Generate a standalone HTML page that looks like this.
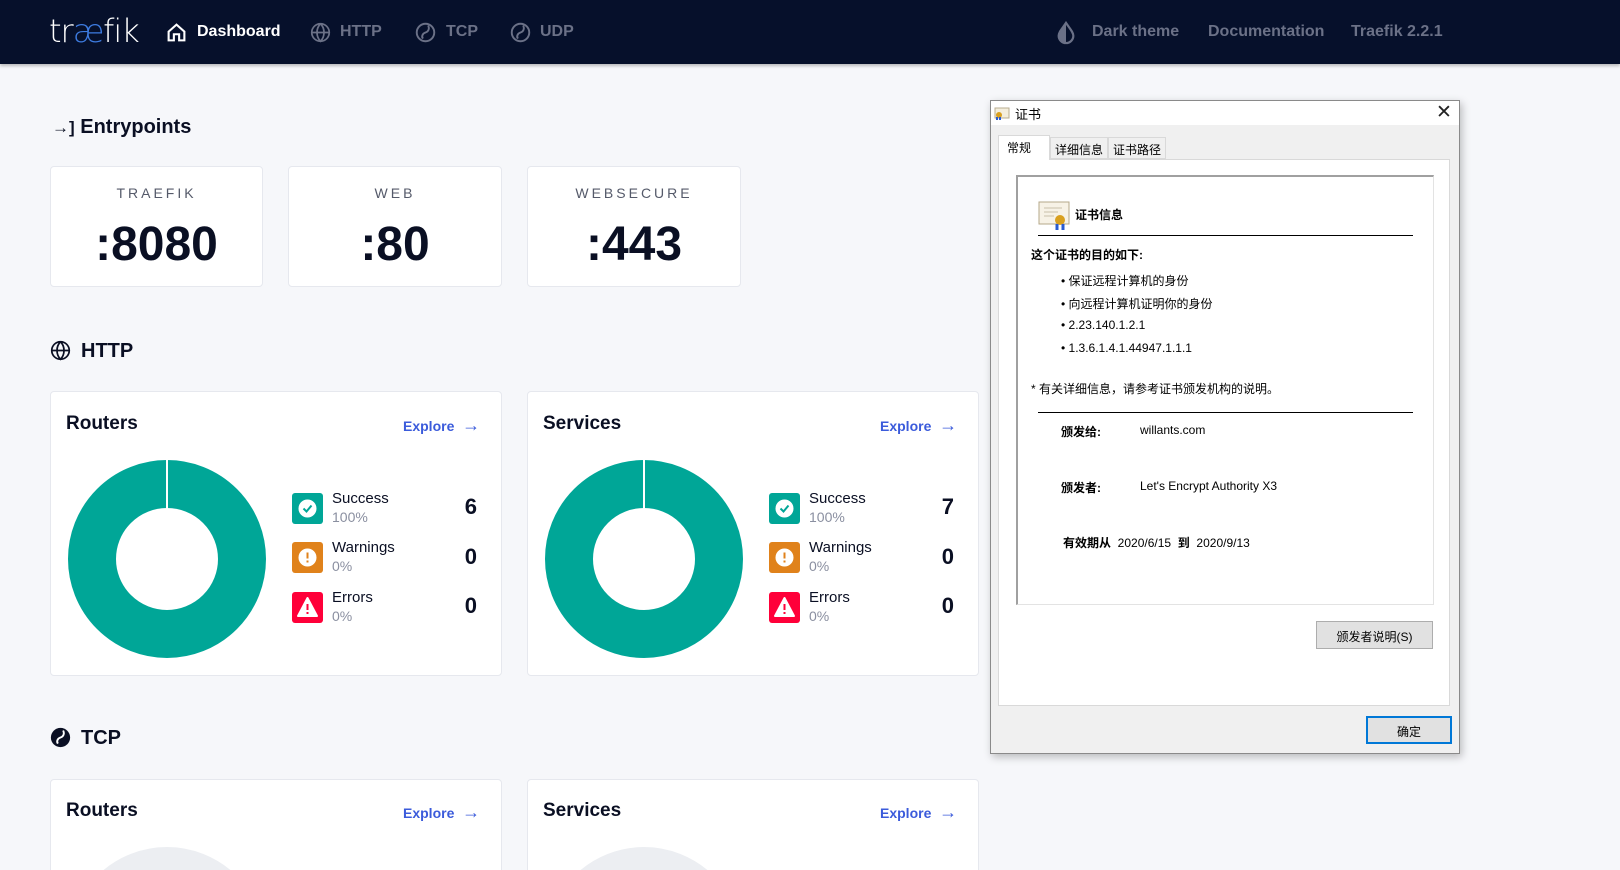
<!DOCTYPE html>
<html><head><meta charset="utf-8"><style>
*{margin:0;padding:0;box-sizing:border-box}
html,body{width:1620px;height:870px;overflow:hidden}
body{background:#f6f7fa;font-family:"Liberation Sans","Noto Sans CJK SC",sans-serif;position:relative;color:#0a0f23}
.a{position:absolute}
.nav{left:0;top:0;width:1620px;height:64px;background:#06102b;box-shadow:0 2px 3px rgba(0,0,0,.25)}
.ni{color:#6b7187;font-size:16px;font-weight:bold;top:23px}
.h{font-size:20px;font-weight:bold;color:#0a0f23}
.card{background:#fff;border:1px solid #e6e8ee;border-radius:4px}
.lbl{width:100%;text-align:center;font-size:14px;letter-spacing:3px;color:#555a6a}
.val{width:100%;text-align:center;font-size:48px;font-weight:bold;color:#0a0f23}
.ct{font-size:19px;font-weight:bold}
.ex{font-size:14px;color:#3b5bdb;font-weight:bold}
.ic{width:31px;height:31px;border-radius:3px}
.st{font-size:15px;color:#0a0f23;line-height:18px}
.st span{display:block;color:#8a8fa0;font-size:14px}
.num{font-size:22px;font-weight:bold;width:30px;text-align:right}
.d{font-size:12px;color:#000}
.b{font-weight:bold}
</style></head><body>
<div class="a nav"></div>
<div class="a" style="left:49px;top:12px;font-size:32px;color:#fff;font-family:'DejaVu Sans',sans-serif;font-weight:200;letter-spacing:-1px">tr<span style="color:#3d7be0">æ</span>fik</div>
<svg class="a" style="left:166px;top:22px" width="21" height="21" viewBox="0 0 24 24" fill="none" stroke="#fff" stroke-width="2.4"><path d="M3 11L12 3l9 8v10H15v-7H9v7H3z"/></svg>
<div class="a ni" style="left:197px;color:#fff">Dashboard</div>
<svg class="a" style="left:310px;top:22px" width="21" height="21" viewBox="0 0 24 24" fill="none" stroke="#6b7187" stroke-width="2"><circle cx="12" cy="12" r="10"/><path d="M2 12h20M12 2c3 3 4 6 4 10s-1 7-4 10c-3-3-4-6-4-10s1-7 4-10"/></svg>
<div class="a ni" style="left:340px">HTTP</div>
<svg class="a" style="left:415px;top:22px" width="21" height="21" viewBox="0 0 24 24" fill="none" stroke="#6b7187" stroke-width="2.2"><circle cx="12" cy="12" r="10"/><path d="M9 19c-2-3 0-6 3-7s5-4 3-8"/></svg>
<div class="a ni" style="left:446px">TCP</div>
<svg class="a" style="left:510px;top:22px" width="21" height="21" viewBox="0 0 24 24" fill="none" stroke="#6b7187" stroke-width="2.2"><circle cx="12" cy="12" r="10"/><path d="M9 19c-2-3 0-6 3-7s5-4 3-8"/></svg>
<div class="a ni" style="left:540px">UDP</div>
<svg class="a" style="left:1055px;top:21px" width="22" height="24" viewBox="0 0 24 26"><path d="M12 2C8 8 4 12 4 16a8 8 0 0016 0c0-4-4-8-8-14z" fill="none" stroke="#6b7187" stroke-width="2.4"/><path d="M12 2C8 8 4 12 4 16a8 8 0 008 8z" fill="#6b7187"/></svg>
<div class="a ni" style="left:1092px">Dark theme</div>
<div class="a ni" style="left:1208px">Documentation</div>
<div class="a ni" style="left:1351px">Traefik 2.2.1</div>

<div class="a h" style="left:52px;top:116px"><span style="font-size:17px">→]</span>&nbsp;Entrypoints</div>
<div class="a card" style="left:50px;top:166px;width:213px;height:121px"><div class="a lbl" style="top:18px">TRAEFIK</div><div class="a val" style="top:50px">:8080</div></div>
<div class="a card" style="left:288px;top:166px;width:214px;height:121px"><div class="a lbl" style="top:18px">WEB</div><div class="a val" style="top:50px">:80</div></div>
<div class="a card" style="left:527px;top:166px;width:214px;height:121px"><div class="a lbl" style="top:18px">WEBSECURE</div><div class="a val" style="top:50px">:443</div></div>

<svg class="a" style="left:50px;top:340px" width="21" height="21" viewBox="0 0 24 24" fill="none" stroke="#0a0f23" stroke-width="2"><circle cx="12" cy="12" r="10"/><path d="M2 12h20M12 2c3 3 4 6 4 10s-1 7-4 10c-3-3-4-6-4-10s1-7 4-10"/></svg>
<div class="a h" style="left:81px;top:340px">HTTP</div>

<div class="a card" style="left:50px;top:391px;width:452px;height:285px"></div>
<div class="a card" style="left:527px;top:391px;width:452px;height:285px"></div>
<div class="a ct" style="left:66px;top:413px">Routers</div>
<div class="a ct" style="left:543px;top:413px">Services</div>
<div class="a ex" style="left:403px;top:415px">Explore &nbsp;<span style="font-size:18px">→</span></div>
<div class="a ex" style="left:880px;top:415px">Explore &nbsp;<span style="font-size:18px">→</span></div>
<svg class="a" style="left:67px;top:459px" width="200" height="200"><circle cx="100" cy="100" r="75" fill="none" stroke="#00a697" stroke-width="48"/><line x1="100" y1="0" x2="100" y2="50" stroke="#fff" stroke-width="2"/></svg>
<svg class="a" style="left:544px;top:459px" width="200" height="200"><circle cx="100" cy="100" r="75" fill="none" stroke="#00a697" stroke-width="48"/><line x1="100" y1="0" x2="100" y2="50" stroke="#fff" stroke-width="2"/></svg>

<div class="a" style="left:292px;top:493px">
 <div class="a ic" style="top:0;background:#00a697"><svg width="31" height="31"><circle cx="15.5" cy="15.5" r="9" fill="#fff"/><path d="M11.5 15.5l3 3 5-6" stroke="#00a697" stroke-width="2" fill="none"/></svg></div>
 <div class="a st" style="left:40px;top:-3px;width:100px">Success<span>100%</span></div><div class="a num" style="left:155px;top:1px">6</div>
 <div class="a ic" style="top:49px;background:#e0821b"><svg width="31" height="31"><circle cx="15.5" cy="15.5" r="9" fill="#fff"/><path d="M15.5 10.5v6M15.5 18.5v2" stroke="#e0821b" stroke-width="2"/></svg></div>
 <div class="a st" style="left:40px;top:46px;width:100px">Warnings<span>0%</span></div><div class="a num" style="left:155px;top:51px">0</div>
 <div class="a ic" style="top:99px;background:#ff0039"><svg width="31" height="31"><path d="M15.5 6L25 24H6z" fill="#fff" stroke="#fff" stroke-linejoin="round" stroke-width="2"/><path d="M15.5 12v6M15.5 20v2" stroke="#ff0039" stroke-width="2"/></svg></div>
 <div class="a st" style="left:40px;top:96px;width:100px">Errors<span>0%</span></div><div class="a num" style="left:155px;top:100px">0</div>
</div>
<div class="a" style="left:769px;top:493px">
 <div class="a ic" style="top:0;background:#00a697"><svg width="31" height="31"><circle cx="15.5" cy="15.5" r="9" fill="#fff"/><path d="M11.5 15.5l3 3 5-6" stroke="#00a697" stroke-width="2" fill="none"/></svg></div>
 <div class="a st" style="left:40px;top:-3px;width:100px">Success<span>100%</span></div><div class="a num" style="left:155px;top:1px">7</div>
 <div class="a ic" style="top:49px;background:#e0821b"><svg width="31" height="31"><circle cx="15.5" cy="15.5" r="9" fill="#fff"/><path d="M15.5 10.5v6M15.5 18.5v2" stroke="#e0821b" stroke-width="2"/></svg></div>
 <div class="a st" style="left:40px;top:46px;width:100px">Warnings<span>0%</span></div><div class="a num" style="left:155px;top:51px">0</div>
 <div class="a ic" style="top:99px;background:#ff0039"><svg width="31" height="31"><path d="M15.5 6L25 24H6z" fill="#fff" stroke="#fff" stroke-linejoin="round" stroke-width="2"/><path d="M15.5 12v6M15.5 20v2" stroke="#ff0039" stroke-width="2"/></svg></div>
 <div class="a st" style="left:40px;top:96px;width:100px">Errors<span>0%</span></div><div class="a num" style="left:155px;top:100px">0</div>
</div>

<svg class="a" style="left:50px;top:727px" width="21" height="21" viewBox="0 0 24 24"><circle cx="12" cy="12" r="11" fill="#0a0f23"/><path d="M9 19c-2-3 0-6 3-7s5-4 3-8" stroke="#fff" stroke-width="2.2" fill="none"/></svg>
<div class="a h" style="left:81px;top:727px">TCP</div>
<div class="a card" style="left:50px;top:779px;width:452px;height:100px"></div>
<div class="a card" style="left:527px;top:779px;width:452px;height:100px"></div>
<div class="a ct" style="left:66px;top:800px">Routers</div>
<div class="a ct" style="left:543px;top:800px">Services</div>
<div class="a ex" style="left:403px;top:802px">Explore &nbsp;<span style="font-size:18px">→</span></div>
<div class="a ex" style="left:880px;top:802px">Explore &nbsp;<span style="font-size:18px">→</span></div>
<svg class="a" style="left:67px;top:846px" width="200" height="24"><circle cx="100" cy="100" r="75" fill="none" stroke="#eceef2" stroke-width="48"/></svg>
<svg class="a" style="left:544px;top:846px" width="200" height="24"><circle cx="100" cy="100" r="75" fill="none" stroke="#eceef2" stroke-width="48"/></svg>

<!-- dialog -->
<div class="a" style="left:990px;top:100px;width:470px;height:654px;background:#f0f0f0;border:1px solid #8a8a8a;box-shadow:2px 3px 8px rgba(0,0,0,.25)"></div>
<div class="a" style="left:991px;top:101px;width:468px;height:24px;background:#fff"></div>
<svg class="a" style="left:994px;top:106px" width="16" height="14"><rect x="1" y="2" width="14" height="10" fill="#f4eedd" stroke="#b9ad90"/><circle cx="5" cy="9" r="3" fill="#d9a020"/><path d="M3 11v3M6 11v3" stroke="#2a5bd0" stroke-width="2"/></svg>
<div class="a d" style="left:1015px;top:104px;font-size:13px">证书</div>
<div class="a" style="left:1436px;top:101px;font-size:19px;color:#222;font-family:'DejaVu Sans',sans-serif;font-weight:200">✕</div>
<div class="a" style="left:998px;top:159px;width:452px;height:547px;background:#fff;border:1px solid #d9d9d9"></div>
<div class="a d" style="left:998px;top:135px;width:52px;height:25px;background:#fff;border:1px solid #d9d9d9;border-bottom:none;padding:3px 0 0 8px">常规</div>
<div class="a d" style="left:1050px;top:137px;width:58px;height:22px;background:#f0f0f0;border:1px solid #d9d9d9;padding:3px 0 0 4px">详细信息</div>
<div class="a d" style="left:1108px;top:137px;width:58px;height:22px;background:#f0f0f0;border:1px solid #d9d9d9;padding:3px 0 0 4px">证书路径</div>
<div class="a" style="left:1016px;top:175px;width:418px;height:430px;background:#fff;border:1px solid #e3e3e3;border-top:2px solid #a0a0a0;border-left:2px solid #a0a0a0"></div>
<svg class="a" style="left:1038px;top:201px" width="34" height="30"><rect x="1" y="1" width="30" height="22" fill="#f7f2e6" stroke="#b6a88a"/><path d="M6 7h18M6 11h14M6 15h10" stroke="#c9c0aa"/><circle cx="22" cy="19" r="5" fill="#d9a020"/><path d="M19 23v6M25 23v6" stroke="#2a5bd0" stroke-width="3"/></svg>
<div class="a d b" style="left:1075px;top:206px">证书信息</div>
<div class="a" style="left:1038px;top:235px;width:375px;height:1px;background:#000"></div>
<div class="a d b" style="left:1031px;top:246px">这个证书的目的如下:</div>
<div class="a d" style="left:1061px;top:272px">• 保证远程计算机的身份</div>
<div class="a d" style="left:1061px;top:295px">• 向远程计算机证明你的身份</div>
<div class="a d" style="left:1061px;top:318px">• 2.23.140.1.2.1</div>
<div class="a d" style="left:1061px;top:341px">• 1.3.6.1.4.1.44947.1.1.1</div>
<div class="a d" style="left:1031px;top:380px">* 有关详细信息，请参考证书颁发机构的说明。</div>
<div class="a" style="left:1038px;top:412px;width:375px;height:1px;background:#000"></div>
<div class="a d b" style="left:1061px;top:423px">颁发给:</div>
<div class="a d" style="left:1140px;top:423px">willants.com</div>
<div class="a d b" style="left:1061px;top:479px">颁发者:</div>
<div class="a d" style="left:1140px;top:479px">Let's Encrypt Authority X3</div>
<div class="a d" style="left:1063px;top:534px"><b>有效期从</b>&nbsp; 2020/6/15 &nbsp;<b>到</b>&nbsp; 2020/9/13</div>
<div class="a d" style="left:1316px;top:621px;width:117px;height:28px;background:#e1e1e1;border:1px solid #adadad;text-align:center;padding-top:6px">颁发者说明(S)</div>
<div class="a d" style="left:1366px;top:716px;width:86px;height:28px;background:#e1e1e1;border:2px solid #0078d7;text-align:center;padding-top:5px">确定</div>
</body></html>
